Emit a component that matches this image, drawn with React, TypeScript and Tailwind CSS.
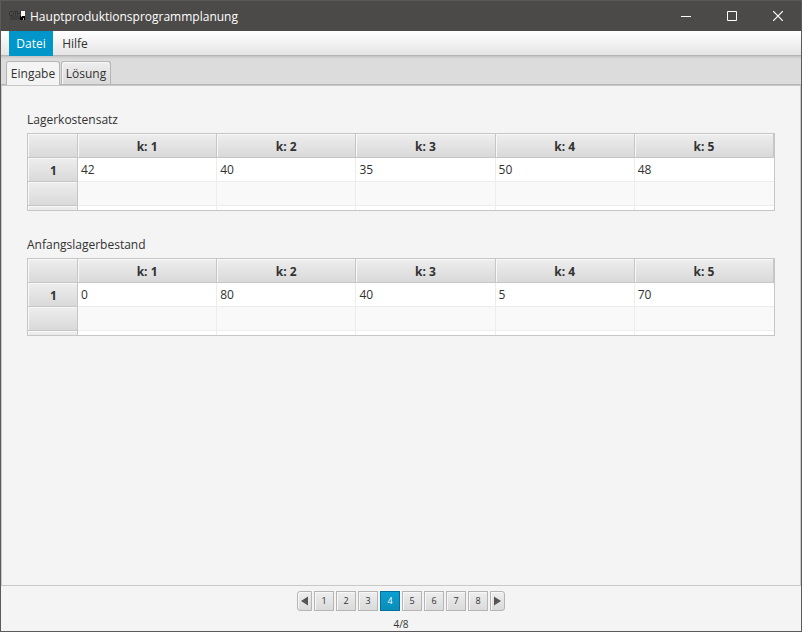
import { useState } from "react";

type MatrixProps = {
  title: string;
  values: number[];
};

const headerCell =
  "border-r border-b border-[#c6c6c6] bg-linear-to-b from-[#eeeeee] to-[#d9d9d9] shadow-[inset_1px_1px_0_#f8f8f8] p-0 pt-[2px] font-bold text-center";

function Matrix({ title, values }: MatrixProps) {
  return (
    <section>
      <h2 className="h-[21px] leading-4">{title}</h2>
      <div className="h-[78px] overflow-hidden border border-[#c6c6c6] bg-white">
        <table aria-label={title} className="w-full table-fixed border-separate border-spacing-0">
          <thead>
            <tr className="h-6">
              <th className={`w-[50px] ${headerCell}`} />
              {values.map((_, i) => (
                <th key={i} scope="col" className={headerCell}>
                  k: {i + 1}
                </th>
              ))}
            </tr>
          </thead>
          <tbody>
            <tr className="h-6">
              <th scope="row" className={`pl-[2px] ${headerCell}`}>
                1
              </th>
              {values.map((value, i) => (
                <td key={i} className="border-r border-b border-[#ededed] p-0 pl-[3px] last:border-r-0">
                  {value}
                </td>
              ))}
            </tr>
            <tr className="h-6 bg-[#f9f9f9]">
              <th className={headerCell} />
              {values.map((_, i) => (
                <td key={i} className="border-r border-b border-[#ededed] p-0 last:border-r-0" />
              ))}
            </tr>
            <tr className="h-6">
              <th className={headerCell} />
              {values.map((_, i) => (
                <td key={i} className="border-r border-b border-[#ededed] p-0 last:border-r-0" />
              ))}
            </tr>
          </tbody>
        </table>
      </div>
    </section>
  );
}

function TitleBar() {
  const control = "flex h-[30px] w-[46px] items-center justify-center";
  return (
    <header className="flex h-[30px] items-center bg-[#4c4a48] pl-2 text-white">
      <svg width="16" height="16" viewBox="0 0 16 16" aria-hidden="true" shapeRendering="crispEdges">
        <path d="M1 3h3v1H1zM0 4h1v3H0zM4 4h1v3H4zM1 7h3v1H1zM5 3h3v1H5zM6 4h1v4H6zM8 3h1v5H8zM9 5h2v1H9zM11 3h1v5h-1z" fill="#363433" />
        <path d="M1 8h10v4H1z" fill="#413f3e" />
        <path d="M12 3h4v5h-4z" fill="#fff" />
        <path d="M11 8h5v4h-5z" fill="#000" />
        <path d="M12 8h1v1h-1zM14 10h1v2h-1z" fill="#aaa" />
      </svg>
      <h1 className="ml-[5px] flex-1 pt-px leading-4">Hauptproduktionsprogrammplanung</h1>
      <div className="flex">
        <button aria-label="Minimieren" className={control}>
          <svg width="10" height="10" viewBox="0 0 10 10">
            <path d="M0 5.500h10" stroke="#fff" />
          </svg>
        </button>
        <button aria-label="Maximieren" className={control}>
          <svg width="10" height="10" viewBox="0 0 10 10">
            <path d="M.5.5h9v9h-9z" fill="none" stroke="#fff" />
          </svg>
        </button>
        <button aria-label="Schließen" className={control}>
          <svg width="10" height="10" viewBox="0 0 10 10">
            <path d="M0 0l10 10M10 0L0 10" stroke="#fff" strokeWidth="1.200" />
          </svg>
        </button>
      </div>
    </header>
  );
}

const tabs = ["Eingabe", "Lösung"];

export default function App() {
  const [page, setPage] = useState(4);
  const [tab, setTab] = useState("Eingabe");
  const arrow =
    "flex h-5 w-[15px] items-center justify-center border border-[#b5b5b5] bg-linear-to-b from-[#eeeeee] to-[#dadada] shadow-[inset_1px_1px_0_#f8f8f8]";

  return (
    <div className="flex min-h-screen flex-col border border-[#5b5a59] bg-[#f4f4f4] font-['Open_Sans','Noto_Sans',sans-serif] text-[12px] text-[#323232]">
      <TitleBar />
      <nav className="flex h-[25px] border-b border-[#b5b5b5] bg-linear-to-b from-white to-[#e5e5e5] pl-2">
        <button className="-mb-px w-11 bg-[#0096c9] pt-px text-center text-white">Datei</button>
        <button className="w-11 pt-[2px] text-center">Hilfe</button>
      </nav>

      <div
        role="tablist"
        className="flex h-[29px] items-end gap-px border-b border-[#b5b5b5] bg-[#dcdcdc] pl-[5px] shadow-[inset_0_3px_3px_-2px_#bbbbbb]"
      >
        {tabs.map((name) => (
          <button
            key={name}
            role="tab"
            aria-selected={tab === name}
            onClick={() => setTab(name)}
            className={
              tab === name
                ? "-mb-px h-6 w-[54px] rounded-t-[3px] border border-b-0 border-[#b5b5b5] bg-[#f4f4f4] pt-px text-center"
                : "h-[23px] w-[50px] rounded-t-[3px] border border-b-0 border-[#b5b5b5] bg-linear-to-b from-[#eeeeee] to-[#dadada] pt-[2px] text-center shadow-[inset_1px_1px_0_#f8f8f8]"
            }
          >
            {name}
          </button>
        ))}
      </div>

      <main className="flex flex-1 flex-col gap-[26px] border border-[#c8c8c8] px-[25px] pt-[26px]">
        <Matrix title="Lagerkostensatz" values={[42, 40, 35, 50, 48]} />
        <Matrix title="Anfangslagerbestand" values={[0, 80, 40, 5, 70]} />
      </main>

      <footer className="flex h-[45px] flex-col items-center pt-[5px] text-[10px]">
        <nav aria-label="Seiten" className="flex gap-[2px] text-[9px]">
          <button aria-label="Zurück" onClick={() => setPage(Math.max(1, page - 1))} className={`rounded-l-[3px] ${arrow}`}>
            <svg width="7" height="10" viewBox="0 0 7 10">
              <path d="M7 .5v9L0 5z" fill="#555" />
            </svg>
          </button>
          {[1, 2, 3, 4, 5, 6, 7, 8].map((n) => (
            <button
              key={n}
              onClick={() => setPage(n)}
              aria-current={n === page ? "page" : undefined}
              className={
                n === page
                  ? "size-5 border border-[#00719a] bg-linear-to-b from-[#0c9fd0] to-[#0a8dba] text-center text-white"
                  : "size-5 border border-[#b5b5b5] bg-linear-to-b from-[#eeeeee] to-[#dadada] text-center shadow-[inset_1px_1px_0_#f8f8f8]"
              }
            >
              {n}
            </button>
          ))}
          <button aria-label="Weiter" onClick={() => setPage(Math.min(8, page + 1))} className={`rounded-r-[3px] ${arrow}`}>
            <svg width="7" height="10" viewBox="0 0 7 10">
              <path d="M0 .5v9L7 5z" fill="#555" />
            </svg>
          </button>
        </nav>
        <p className="mt-[5px] leading-4">{page}/8</p>
      </footer>
    </div>
  );
}
